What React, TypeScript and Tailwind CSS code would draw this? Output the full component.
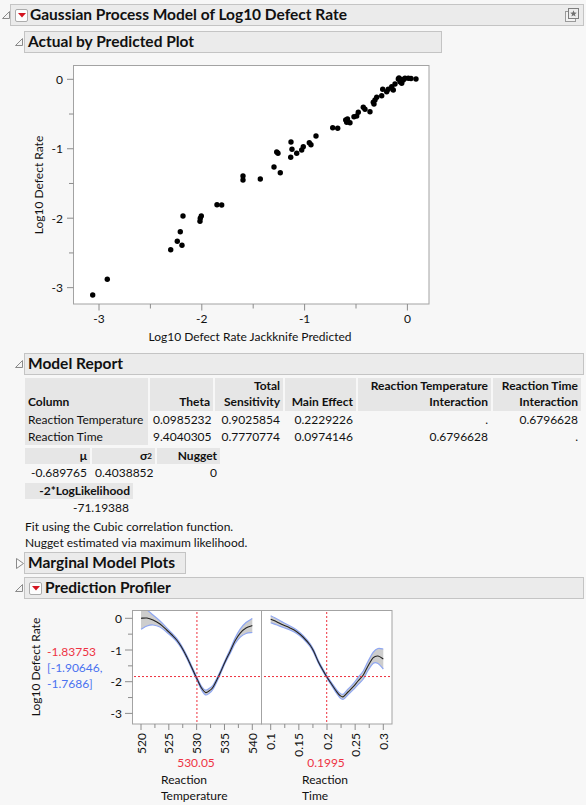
import React from 'react';

type Pt = [number, number];

// catmull-rom through the points, as cubic bezier segments
function smooth(pts: Pt[], move = true): string {
  let d = `${move ? 'M' : 'L'}${pts[0][0]},${pts[0][1]}`;
  for (let i = 0; i < pts.length - 1; i++) {
    const p0 = pts[i - 1] || pts[i];
    const p1 = pts[i];
    const p2 = pts[i + 1];
    const p3 = pts[i + 2] || p2;
    const c1x = p1[0] + (p2[0] - p0[0]) / 6;
    const c1y = p1[1] + (p2[1] - p0[1]) / 6;
    const c2x = p2[0] - (p3[0] - p1[0]) / 6;
    const c2y = p2[1] - (p3[1] - p1[1]) / 6;
    d += ` C${c1x.toFixed(1)},${c1y.toFixed(1)} ${c2x.toFixed(1)},${c2y.toFixed(1)} ${p2[0]},${p2[1]}`;
  }
  return d;
}

function bandPaths(center: Pt[], hw: number[]) {
  const up = center.map(([x, y], i) => [x, y - hw[i]] as Pt);
  const lo = center.map(([x, y], i) => [x, y + hw[i]] as Pt).reverse();
  return {
    fill: `${smooth(up)} ${smooth(lo, false)} Z`,
    up: smooth(up),
    lo: smooth(lo),
    line: smooth(center),
  };
}

const OpenTri = () => (
  <svg width="8" height="8" viewBox="0 0 8 8" className="shrink-0">
    <polygon points="7.5,0.5 7.5,7.5 0.5,7.5" fill="#f4f4f4" stroke="#8a8a8a" />
  </svg>
);

const ClosedTri = () => (
  <svg width="8" height="11" viewBox="0 0 8 11" className="shrink-0">
    <polygon points="0.5,0.5 7.5,5.5 0.5,10.5" fill="#fafafa" stroke="#8a8a8a" />
  </svg>
);

const RedMenu = () => (
  <div className="w-[13px] h-[13px] shrink-0 rounded-[2px] border border-[#acacac] bg-[#fdfdfd] flex items-center justify-center">
    <svg width="8" height="5" viewBox="0 0 8 5">
      <polygon points="0,0 8,0 4,4.5" fill="#d4141f" />
    </svg>
  </div>
);

const PinIcon = () => (
  <svg width="16" height="16" viewBox="0 0 16 16">
    <rect x="1.5" y="4.5" width="10" height="10" fill="#f2f2f2" stroke="#9a9a9a" />
    <rect x="4.5" y="1.5" width="10" height="10" fill="#ececec" stroke="#7e7e7e" />
    <polygon
      points="9.5,3.3 10.4,5.6 12.8,5.7 10.9,7.2 11.6,9.5 9.5,8.2 7.4,9.5 8.1,7.2 6.2,5.7 8.6,5.6"
      fill="#707070"
    />
  </svg>
);

const boxCls = 'h-[22px] border border-[#c4c4c4] bg-[#ebebeb] flex items-center text-[15.5px] font-bold';

// ---- actual by predicted ----
const sx = (v: number) => 407.4 + v * 102.8;
const sy = (v: number) => 79.3 - v * 69.45;

const dots: Pt[] = [
  [92.7, 295], [107.3, 279.3], [170.7, 249.7], [177.3, 241.3], [180.3, 231.7], [182, 245.3],
  [183, 216], [200, 221.3], [200.3, 218.3], [201.3, 216], [217, 204.7], [221.7, 205],
  [243, 176], [243, 180], [260.3, 179], [274, 167], [276.7, 152], [278, 153.3], [280.3, 172.7],
  [290.7, 157.3], [291, 142], [292, 149.3], [296.7, 153.3], [301.7, 150], [303.3, 146.7],
  [309.3, 142.7], [311, 144.7], [316, 136], [332.7, 127.7], [337.7, 128.3], [345.7, 120],
  [346.7, 122.3], [350, 122.7], [347.5, 119], [354, 116.7], [356.7, 116], [358.3, 112.3],
  [363.3, 107.3], [365, 109.3], [370, 111.7], [373.3, 102.3], [374, 104], [375, 100],
  [376.7, 97.3], [381.7, 95.7], [382.7, 89.3], [386.7, 91.7], [388.3, 89.3], [391.7, 86.7],
  [393.3, 90], [398.3, 79], [400, 81.7], [401.7, 83.3], [403.3, 80], [405, 78.3], [408.3, 78.3],
  [411, 78.5], [416, 79], [399, 78], [402, 79.5], [395, 84],
];

const ScatterPlot = () => (
  <svg width="450" height="300" className="block">
    <g transform="translate(0,-53)" fontSize="12" fill="#111">
      <rect x="73.5" y="65.5" width="355.5" height="238.5" fill="#fff" stroke="#a3a3a3" />
      {[0, -1, -2, -3].map((v) => (
        <g key={v}>
          <line x1="67" x2="73.5" y1={sy(v)} y2={sy(v)} stroke="#8c8c8c" />
          <text x="63" y={sy(v) + 4.5} textAnchor="end">{v}</text>
        </g>
      ))}
      {[-0.5, -1.5, -2.5].map((v) => (
        <line key={v} x1="69" x2="73.5" y1={sy(v)} y2={sy(v)} stroke="#8c8c8c" />
      ))}
      {[-3, -2, -1, 0].map((v) => (
        <g key={v}>
          <line x1={sx(v)} x2={sx(v)} y1="304" y2="310.5" stroke="#8c8c8c" />
          <text x={sx(v)} y="323" textAnchor="middle">{v}</text>
        </g>
      ))}
      {[-2.5, -1.5, -0.5].map((v) => (
        <line key={v} x1={sx(v)} x2={sx(v)} y1="304" y2="308.5" stroke="#8c8c8c" />
      ))}
      <text x="250" y="341" textAnchor="middle">Log10 Defect Rate Jackknife Predicted</text>
      <text transform="translate(43,185) rotate(-90)" textAnchor="middle">Log10 Defect Rate</text>
      {dots.map(([x, y], i) => (
        <circle key={i} cx={x} cy={y} r="2.7" fill="#000" />
      ))}
    </g>
  </svg>
);

// ---- profiler ----
const py = (v: number) => 618.3 - v * 31.7;
const px1 = (v: number) => 141 + (v - 520) * 5.565;
const px2 = (v: number) => 270.7 + (v - 0.1) * 563;

const c1: Pt[] = [
  [141, 618.3], [147, 618], [153, 620], [160, 624], [166.7, 630], [172, 635], [176.7, 640],
  [181.5, 647], [186.7, 656.7], [191.5, 667], [196.7, 678.3], [201.7, 688.3], [205.5, 692.5],
  [209, 691], [213.3, 686.7], [220, 673.3], [225, 662], [230, 651.7], [235, 641], [240, 633.3],
  [246, 628], [252.3, 625.5],
];
const hw1 = [11, 8, 5, 3, 2.2, 1.8, 1.6, 1.5, 1.5, 1.5, 1.5, 1.8, 2.4, 2.4, 2, 1.6, 1.6, 2, 2.8, 4, 5.5, 7];

const c2: Pt[] = [
  [270.7, 619.3], [277, 622], [283.3, 625], [290, 628], [296.7, 631.7], [303, 637], [310, 645],
  [314, 652], [318.3, 661.7], [322.5, 669.5], [326.7, 676.7], [331.5, 684], [336.7, 691.7],
  [340, 695.5], [343.3, 696.7], [348, 692], [353.3, 686.7], [358, 681], [363.3, 675], [368, 666],
  [373.3, 657.7], [378, 656], [383.3, 659],
];
const hw2 = [3.5, 3, 2.5, 2, 1.8, 1.6, 1.5, 1.5, 1.4, 1.3, 1.2, 1.4, 1.8, 2.2, 2.5, 2.8, 3, 3.5, 4, 4.5, 5.5, 7.5, 10];

const b1 = bandPaths(c1, hw1);
const b2 = bandPaths(c2, hw2);

const Curve = ({ b, clip }: { b: ReturnType<typeof bandPaths>; clip: string }) => (
  <g clipPath={`url(#${clip})`}>
    <path d={b.fill} fill="#c4c4c4" fillOpacity="0.85" />
    <path d={b.up} fill="none" stroke="#8ea6f2" strokeWidth="1.2" />
    <path d={b.lo} fill="none" stroke="#8ea6f2" strokeWidth="1.2" />
    <path d={b.line} fill="none" stroke="#222" strokeWidth="1.1" />
  </g>
);

const Profiler = () => (
  <svg width="420" height="206" className="block">
    <defs>
      <clipPath id="pc1">
        <rect x="132" y="611" width="129" height="113" />
      </clipPath>
      <clipPath id="pc2">
        <rect x="261" y="611" width="131" height="113" />
      </clipPath>
    </defs>
    <g transform="translate(0,-599)" fontSize="12" fill="#111">
      <rect x="132.5" y="610.5" width="129" height="113.5" fill="#fff" />
      <rect x="261.5" y="610.5" width="130.5" height="113.5" fill="#fff" />
      <Curve b={b1} clip="pc1" />
      <Curve b={b2} clip="pc2" />
      {/* current settings */}
      <g stroke="#ee2f3c" strokeDasharray="2 2" strokeWidth="1">
        <line x1={px1(530.05)} x2={px1(530.05)} y1="612" y2="724" />
        <line x1="134" x2="261" y1={py(-1.83753)} y2={py(-1.83753)} />
        <line x1={px2(0.1995)} x2={px2(0.1995)} y1="612" y2="724" />
        <line x1="264" x2="391" y1={py(-1.83753)} y2={py(-1.83753)} />
      </g>
      <rect x="132.5" y="610.5" width="129" height="113.5" fill="none" stroke="#a3a3a3" />
      <rect x="261.5" y="610.5" width="130.5" height="113.5" fill="none" stroke="#a3a3a3" />
      {[0, -1, -2, -3].map((v) => (
        <g key={v}>
          <line x1="125" x2="132.5" y1={py(v)} y2={py(v)} stroke="#8c8c8c" />
          <text x="122" y={py(v) + 4.5} textAnchor="end">{v}</text>
        </g>
      ))}
      {[-0.5, -1.5, -2.5].map((v) => (
        <line key={v} x1="128" x2="132.5" y1={py(v)} y2={py(v)} stroke="#8c8c8c" />
      ))}
      {[520, 525, 530, 535, 540].map((v) => (
        <g key={v}>
          <line x1={px1(v)} x2={px1(v)} y1="724" y2="730" stroke="#8c8c8c" />
          <text transform={`translate(${px1(v) + 4.5},733) rotate(-90)`} textAnchor="end">{v}</text>
        </g>
      ))}
      {[522.5, 527.5, 532.5, 537.5].map((v) => (
        <line key={v} x1={px1(v)} x2={px1(v)} y1="724" y2="728" stroke="#8c8c8c" />
      ))}
      {[0.1, 0.15, 0.2, 0.25, 0.3].map((v) => (
        <g key={v}>
          <line x1={px2(v)} x2={px2(v)} y1="724" y2="730" stroke="#8c8c8c" />
          <text transform={`translate(${px2(v) + 4.5},733) rotate(-90)`} textAnchor="end">{v}</text>
        </g>
      ))}
      {[0.125, 0.175, 0.225, 0.275].map((v) => (
        <line key={v} x1={px2(v)} x2={px2(v)} y1="724" y2="728" stroke="#8c8c8c" />
      ))}
      <text transform="translate(40,667) rotate(-90)" textAnchor="middle">Log10 Defect Rate</text>
      <text x="47" y="655.5" fill="#ee3344">-1.83753</text>
      <text x="47" y="671.5" fill="#4a72f0">[-1.90646,</text>
      <text x="47" y="687.5" fill="#4a72f0">-1.7686]</text>
      <text x="196" y="766.5" textAnchor="middle" fill="#ee3344">530.05</text>
      <text x="161" y="783.5">Reaction</text>
      <text x="161" y="799.5">Temperature</text>
      <text x="326" y="766.5" textAnchor="middle" fill="#ee3344">0.1995</text>
      <text x="302" y="783.5">Reaction</text>
      <text x="302" y="799.5">Time</text>
    </g>
  </svg>
);

const hdr = 'bg-[#e6e6e6] font-bold flex flex-col justify-end px-[3px] pb-[1px] leading-[16px]';

export default function App() {
  return (
    <div className="w-[586px] h-[805px] overflow-hidden bg-[#f7f7f7] text-[#111] font-['Lato',sans-serif]">
      {/* title */}
      <div className="flex items-center pt-[4px] pl-[2px]">
        <OpenTri />
        <div className={`${boxCls} w-[574px] pl-[4px] pr-[3px]`}>
          <RedMenu />
          <span className="ml-[2px]">Gaussian Process Model of Log10 Defect Rate</span>
          <span className="ml-auto flex">
            <PinIcon />
          </span>
        </div>
      </div>

      {/* actual by predicted */}
      <div className="flex items-center mt-[5px] pl-[15px]">
        <OpenTri />
        <div className={`${boxCls} ml-[1px] w-[418px] pl-[3px]`}>Actual by Predicted Plot</div>
      </div>
      <ScatterPlot />

      {/* model report */}
      <div className="flex items-center pl-[15px]">
        <OpenTri />
        <div className={`${boxCls} ml-[1px] w-[560px] pl-[3px]`}>Model Report</div>
      </div>

      <div className="ml-[25px] mt-[3px] grid grid-cols-[123px_63px_68px_71px_133px_88px] gap-x-[2px] text-[12px]">
        <div className={`${hdr} h-[33px]`}>Column</div>
        <div className={`${hdr} items-end`}>Theta</div>
        <div className={`${hdr} items-end`}>
          <span>Total</span>
          <span>Sensitivity</span>
        </div>
        <div className={`${hdr} items-end`}>Main Effect</div>
        <div className={`${hdr} items-end`}>
          <span>Reaction Temperature</span>
          <span>Interaction</span>
        </div>
        <div className={`${hdr} items-end`}>
          <span>Reaction Time</span>
          <span>Interaction</span>
        </div>

        <div className="bg-[#e6e6e6] h-[17px] leading-[17px] px-[3px]">Reaction Temperature</div>
        <div className="h-[17px] leading-[17px] px-[3px] text-right">0.0985232</div>
        <div className="h-[17px] leading-[17px] px-[3px] text-right">0.9025854</div>
        <div className="h-[17px] leading-[17px] px-[3px] text-right">0.2229226</div>
        <div className="h-[17px] leading-[17px] px-[3px] text-right">.</div>
        <div className="h-[17px] leading-[17px] px-[3px] text-right">0.6796628</div>

        <div className="bg-[#e6e6e6] h-[17px] leading-[17px] px-[3px]">Reaction Time</div>
        <div className="h-[17px] leading-[17px] px-[3px] text-right">9.4040305</div>
        <div className="h-[17px] leading-[17px] px-[3px] text-right">0.7770774</div>
        <div className="h-[17px] leading-[17px] px-[3px] text-right">0.0974146</div>
        <div className="h-[17px] leading-[17px] px-[3px] text-right">0.6796628</div>
        <div className="h-[17px] leading-[17px] px-[3px] text-right">.</div>
      </div>

      <div className="ml-[25px] mt-[3px] grid grid-cols-[65px_63px_63px] gap-x-[2px] text-[12px] w-max">
        <div className="bg-[#e6e6e6] font-bold h-[16px] leading-[16px] px-[3px] text-right">μ</div>
        <div className="bg-[#e6e6e6] font-bold h-[16px] leading-[16px] px-[3px] text-right">
          σ<sup className="text-[8px] relative -top-[1px]">2</sup>
        </div>
        <div className="bg-[#e6e6e6] font-bold h-[16px] leading-[16px] px-[3px] text-right">Nugget</div>
        <div className="h-[17px] leading-[17px] px-[3px] text-right">-0.689765</div>
        <div className="h-[17px] leading-[17px] px-[3px] text-right">0.4038852</div>
        <div className="h-[17px] leading-[17px] px-[3px] text-right">0</div>
      </div>

      <div className="ml-[25px] mt-[2px] w-[108px] text-[12px]">
        <div className="bg-[#e6e6e6] font-bold h-[16px] leading-[16px] px-[3px] text-right">-2*LogLikelihood</div>
        <div className="h-[18px] leading-[18px] px-[4px] text-right">-71.19388</div>
      </div>

      <div className="ml-[25px] mt-[2px] text-[12px] leading-[16px]">
        <div>Fit using the Cubic correlation function.</div>
        <div>Nugget estimated via maximum likelihood.</div>
      </div>

      {/* marginal model plots */}
      <div className="flex items-center mt-[1px] pl-[16px]">
        <ClosedTri />
        <div className={`${boxCls} w-[162px] pl-[3px]`}>Marginal Model Plots</div>
      </div>

      {/* prediction profiler */}
      <div className="flex items-center mt-[3px] pl-[15px]">
        <OpenTri />
        <div className={`${boxCls} ml-[1px] w-[560px] pl-[4px]`}>
          <RedMenu />
          <span className="ml-[3px]">Prediction Profiler</span>
        </div>
      </div>
      <Profiler />
    </div>
  );
}
